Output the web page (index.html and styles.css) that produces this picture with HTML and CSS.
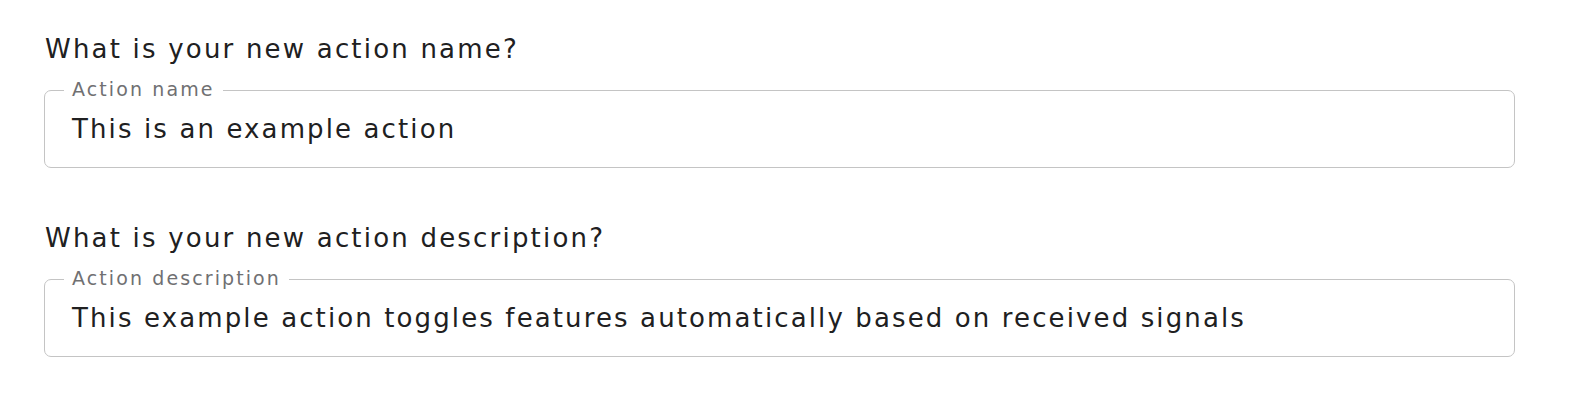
FILE: index.html
```html
<!DOCTYPE html>
<html lang="en">
<head>
<meta charset="utf-8">
<title>New action</title>
<link rel="stylesheet" href="styles.css">
</head>
<body>
<main class="form">
  <section class="group">
    <p class="question">What is your new action name?</p>
    <div class="field">
      <span class="field-label">Action name</span>
      <span class="field-value">This is an example action</span>
    </div>
  </section>
  <section class="group">
    <p class="question">What is your new action description?</p>
    <div class="field">
      <span class="field-label">Action description</span>
      <span class="field-value">This example action toggles features automatically based on received signals</span>
    </div>
  </section>
</main>
</body>
</html>
```
FILE: styles.css
```css
html, body {
  margin: 0;
  background: #ffffff;
}
body {
  font-family: "DejaVu Sans", "Noto Sans", sans-serif;
  color: #202021;
}
.form {
  display: flex;
  flex-direction: column;
  gap: 54px;
  padding: 33px 57px 0 44px;
}
.group {
  display: flex;
  flex-direction: column;
  gap: 25px;
}
.question {
  margin: 0;
  font-size: 26px;
  line-height: 32px;
  letter-spacing: 2.2px;
  padding-left: 1px;
}
.field {
  position: relative;
  height: 76px;
  border: 1px solid #c4c4c4;
  border-radius: 7px;
  display: flex;
  align-items: center;
  padding: 0 27px;
}
.field-label {
  position: absolute;
  top: -12px;
  left: 19px;
  padding: 0 8px;
  background: #ffffff;
  font-size: 19px;
  line-height: 20px;
  letter-spacing: 2.1px;
  color: #707072;
}
.field-value {
  font-size: 26px;
  line-height: 30px;
  letter-spacing: 2.12px;
}
```
